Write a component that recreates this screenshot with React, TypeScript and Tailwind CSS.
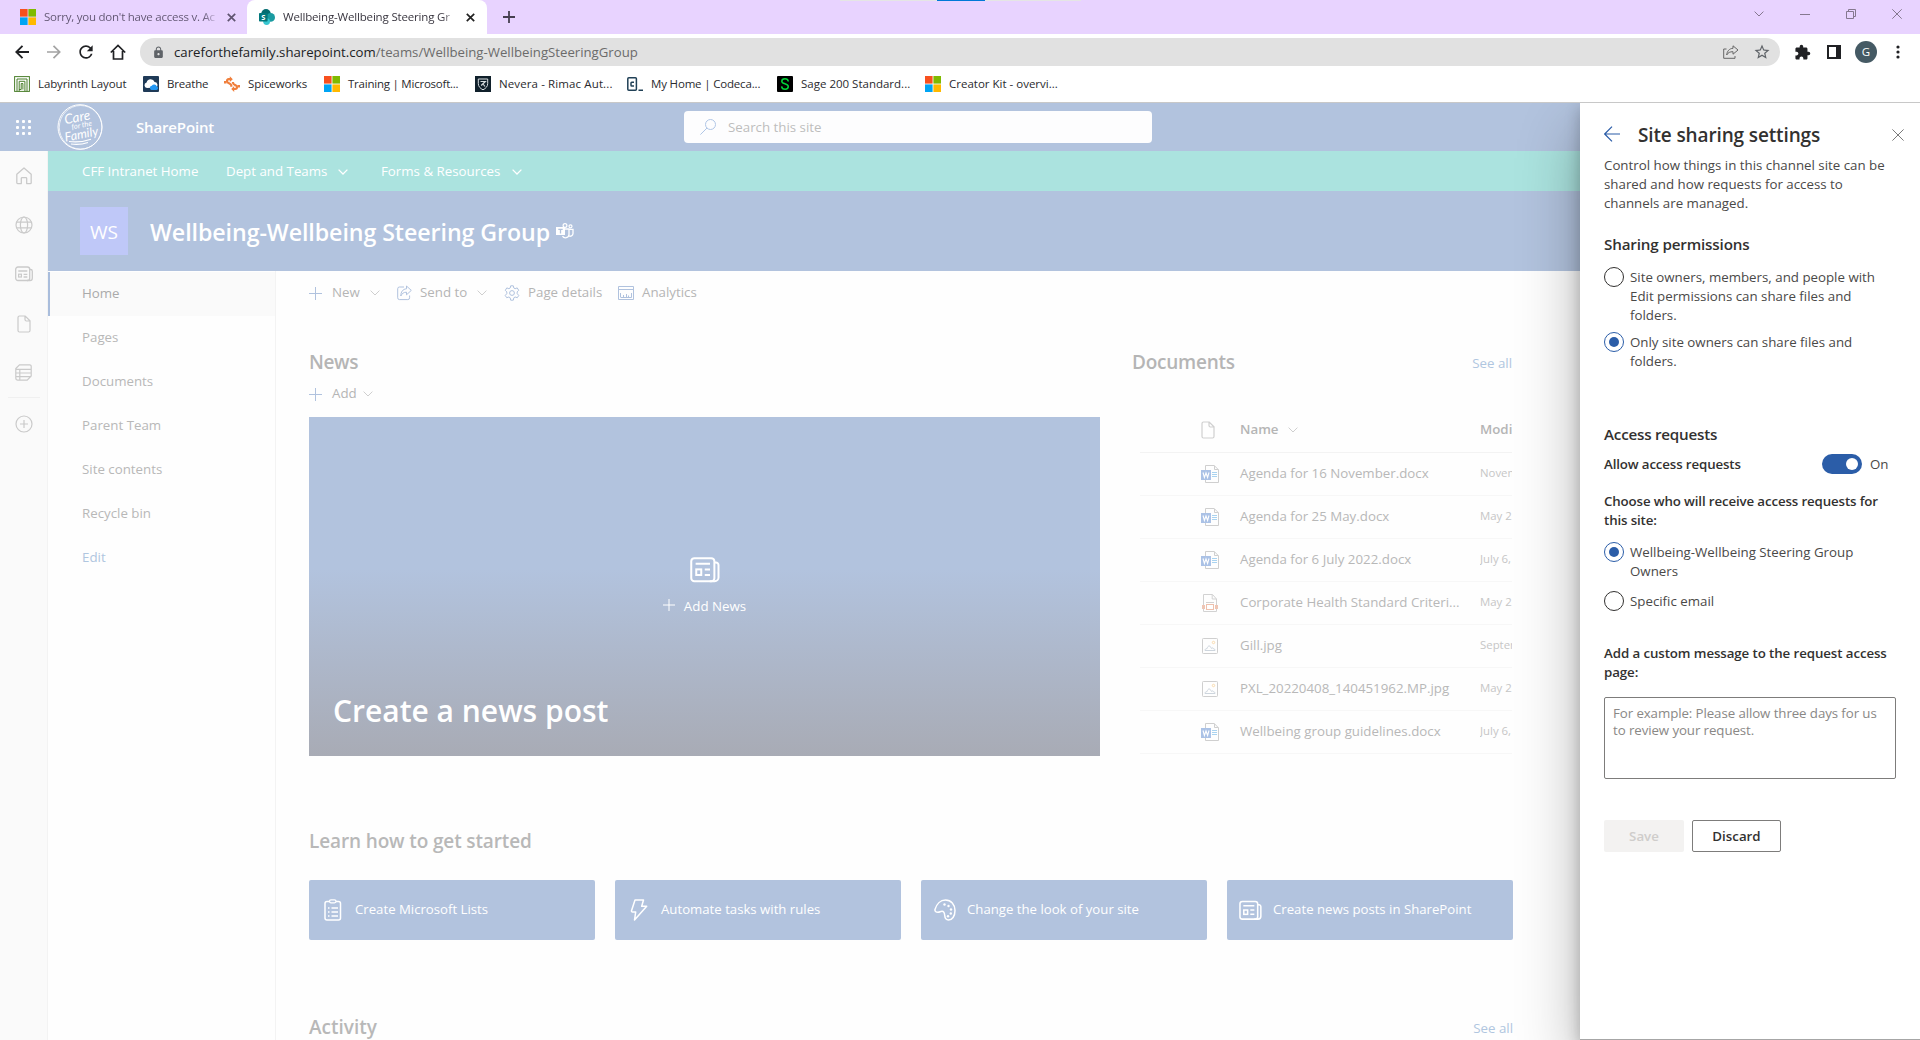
import type { ReactNode } from 'react';
import { MdExtension, MdLock, MdRefresh, MdStarBorder } from 'react-icons/md';

type IconProps = { className?: string };

function Svg({ w, h, className, children }: { w: number; h?: number; className?: string; children: ReactNode }) {
  return (
    <svg
      width={w}
      height={h ?? w}
      viewBox={`0 0 ${w} ${h ?? w}`}
      fill="none"
      stroke="currentColor"
      className={`shrink-0 ${className ?? ''}`}
    >
      {children}
    </svg>
  );
}

/* ---------- icons ---------- */

function MicrosoftIcon() {
  return (
    <Svg w={16} className="stroke-none">
      <path fill="#f8501e" d="M0 0h7.6v7.6H0z" />
      <path fill="#7fba00" d="M8.4 0H16v7.6H8.4z" />
      <path fill="#00a4f4" d="M0 8.4h7.6V16H0z" />
      <path fill="#ffb900" d="M8.4 8.4H16V16H8.4z" />
    </Svg>
  );
}

function SharePointIcon() {
  return (
    <Svg w={16} className="stroke-none">
      <circle cx="7" cy="4.8" r="4.8" fill="#036c70" />
      <circle cx="11.6" cy="8.4" r="4.4" fill="#1a9ba1" />
      <circle cx="7.6" cy="12.6" r="3.4" fill="#37c6d0" />
      <rect x="0" y="4" width="8.6" height="8.6" rx="0.8" fill="#03787c" />
      <text x="4.3" y="11" fontSize="7.5" fontWeight="700" textAnchor="middle" fill="#fff">S</text>
    </Svg>
  );
}

function LabyrinthIcon() {
  return (
    <Svg w={16} className="text-[#4b7f2c]">
      <rect x="0.6" y="0.6" width="14.8" height="14.8" />
      <path d="M3 15.5V3h10v12.5M5.2 15.5V5.3h5.700v10.200M7.200 13.500V7.500h1.700v6M5 13.500h2.200" />
    </Svg>
  );
}

function BreatheIcon() {
  return (
    <Svg w={16} className="stroke-none">
      <rect width="16" height="16" rx="1" fill="#1f3a57" />
      <path fill="#fff" d="M4 12a2.8 2.8 0 0 1-.4-5.5A4.2 4.2 0 0 1 11.6 6 3 3 0 0 1 13 11.6z" />
      <path fill="#2196f3" d="M8.5 14a2.2 2.2 0 0 1 .3-4.3 2.7 2.7 0 0 1 4.9.6A1.9 1.9 0 0 1 13.4 14z" />
    </Svg>
  );
}

function SpiceworksIcon() {
  return (
    <Svg w={16} className="text-[#f07f3c]">
      <path strokeWidth="2.2" d="M6 3.2H4.8A2 2 0 0 0 3 5.2c0 2.200 4.300 1.800 4.300 4.300v1.200" />
      <path strokeWidth="2.2" d="M10 13h1.200A2 2 0 0 0 13 11c0-2.200-4-1.800-4-4.300V6" />
      <path fill="currentColor" stroke="none" d="M5.800.3l3 2.900-3 2.900zM10.200 10v6L7.200 13zM0 5h2.500v2.500H0zM16 11.500h-2.500V9H16z" />
    </Svg>
  );
}

function RimacIcon() {
  return (
    <Svg w={16}>
      <rect width="16" height="16" fill="#10202b" stroke="none" />
      <path stroke="#d7dde0" d="M3.300 3h9.400v4.500c0 3-2 5-4.700 6.300-2.700-1.300-4.700-3.300-4.700-6.300z" />
      <path stroke="#d7dde0" strokeWidth="1.200" d="M5.500 5.500h4.800L6.200 9.500M8 8l2 2.500" />
    </Svg>
  );
}

function CodecademyIcon() {
  return (
    <Svg w={16} className="text-[#204056]">
      <rect x="0.8" y="1.8" width="8.6" height="12.400" rx="1" strokeWidth="1.500" />
      <path strokeWidth="1.500" d="M7 6.200H4.800a.8.800 0 0 0-.8.800v2.300a.8.800 0 0 0 .8.800H7M11.500 14.300H16" />
    </Svg>
  );
}

function SageIcon() {
  return (
    <Svg w={16}>
      <rect width="16" height="16" rx="1" fill="#000" stroke="none" />
      <path
        stroke="#00d639"
        strokeWidth="1.500"
        d="M11.300 5.500C11 3.700 9.700 2.800 8 2.800c-1.900 0-3.200 1-3.200 2.500 0 3.300 6.500 1.700 6.500 5.300 0 1.600-1.400 2.600-3.200 2.600-1.900 0-3.300-1-3.500-2.900"
      />
    </Svg>
  );
}

function Chevron({ className }: IconProps) {
  return (
    <Svg w={10} h={6} className={className}>
      <path d="M.6.600 5 5 9.400.600" />
    </Svg>
  );
}

function Plus({ className }: IconProps) {
  return (
    <Svg w={13} className={className}>
      <path d="M6.500 0v13M0 6.500h13" />
    </Svg>
  );
}

function HomeIcon() {
  return (
    <Svg w={18}>
      <path strokeWidth="1.300" strokeLinejoin="round" d="M1.800 7.300 9 1l7.200 6.300v8.400a.9.900 0 0 1-.9.900h-3.600v-5.100a.8.800 0 0 0-.8-.8H7.100a.8.800 0 0 0-.8.800v5.100H2.700a.9.900 0 0 1-.9-.9z" />
    </Svg>
  );
}

function GlobeIcon() {
  return (
    <Svg w={18}>
      <circle cx="9" cy="9" r="8" strokeWidth="1.200" />
      <ellipse cx="9" cy="9" rx="3.600" ry="8" strokeWidth="1.200" />
      <path strokeWidth="1.200" d="M1.600 6.200h14.800M1.600 11.800h14.800" />
    </Svg>
  );
}

function NewsIcon() {
  return (
    <Svg w={18} h={16}>
      <rect x="0.700" y="1" width="14" height="13.500" rx="2.200" strokeWidth="1.300" />
      <path strokeWidth="1.300" d="M14.700 3.500h.8a1.800 1.800 0 0 1 1.800 1.800v7a2.200 2.200 0 0 1-2.200 2.200h-3M3.300 5h9M8.600 8.300h3.700M8.600 11h3.700" />
      <rect x="3.600" y="8.200" width="2.800" height="2.800" strokeWidth="1.200" />
    </Svg>
  );
}

function BigNewsIcon({ size }: { size: number }) {
  return (
    <svg width={size} height={size} viewBox="0 0 24 24" fill="none" stroke="currentColor" strokeWidth="1.600" className="shrink-0">
      <rect x="1" y="2.500" width="18.500" height="18.500" rx="2.500" />
      <path d="M19.500 6h1.200A2 2 0 0 1 22.800 8v10a3 3 0 0 1-3 3h-4M4.500 7h11.500M11.800 11.500H16M11.800 16H16" />
      <rect x="5" y="11.500" width="4" height="4.500" />
    </svg>
  );
}

function FileIcon() {
  return (
    <Svg w={14} h={18}>
      <path strokeWidth="1.200" d="M2.500 1h5.700L13 5.800v9.700a1.500 1.500 0 0 1-1.500 1.500h-9A1.500 1.500 0 0 1 1 15.500v-13A1.500 1.500 0 0 1 2.500 1zM8 1v3.500A1.500 1.500 0 0 0 9.500 6H13" />
    </Svg>
  );
}

function ListIcon() {
  return (
    <Svg w={17}>
      <path strokeWidth="1.200" d="M4.500.800h10.200a1.500 1.500 0 0 1 1.500 1.500V12l-4 4.200H3A2.200 2.200 0 0 1 .8 14V4.500zM.8 5.300h15.400M.8 9h15.400M.8 12.600h15.400M4.800 5.300v10.900" />
    </Svg>
  );
}

function CirclePlusIcon() {
  return (
    <Svg w={18}>
      <circle cx="9" cy="9" r="8" strokeWidth="1.200" />
      <path strokeWidth="1.200" d="M9 5v8M5 9h8" />
    </Svg>
  );
}

function SendIcon() {
  return (
    <Svg w={15} h={16} className="text-[#b0c2de]">
      <path d="M7 2H2.500A1.800 1.800 0 0 0 .7 3.800v9a1.800 1.800 0 0 0 1.800 1.800h8.300a1.800 1.800 0 0 0 1.800-1.800V10.500" />
      <path strokeLinejoin="round" d="M9.500 3.800V1l4.800 4.400-4.800 4.400V7.200C6.500 7.200 5 8.500 3.800 11c0-4 2-7 5.700-7.200z" />
    </Svg>
  );
}

function GearIcon() {
  return (
    <Svg w={16} className="text-[#b0c2de]">
      <circle cx="8" cy="8" r="2.400" />
      <path
        strokeLinejoin="round"
        d="M6.700.800h2.600l.5 2.200 1.300.700 2.100-.8 1.500 2.400-1.500 1.600v1.800l1.600 1.700-1.500 2.300-2.200-.7-1.300.800-.5 2.400H6.700l-.5-2.400-1.300-.8-2.200.700-1.500-2.300 1.600-1.700V6.900L1.300 5.300l1.500-2.400 2.100.8 1.300-.7z"
      />
    </Svg>
  );
}

function AnalyticsIcon() {
  return (
    <Svg w={16} h={14} className="text-[#b0c2de]">
      <path d="M.5.500h15v13H.5zM.5 3.500h15M2.500 11.500h11M2.500 7v4M5.500 9v2.500M8.500 8v3.500M10.500 9.500v2M13.500 7v4.500" />
    </Svg>
  );
}

function WordIcon() {
  return (
    <Svg w={18}>
      <path stroke="#cfcfcf" d="M4.500 5V.500h8.700l4.300 4.300v12.700h-13V15M13.500.800V4.500h4" />
      <path stroke="#a9d3f0" d="M11 7.500h5M11 9.500h5M11 11.500h5" />
      <rect y="5" width="10" height="10" fill="#abc2e6" stroke="none" />
      <path stroke="#fff" strokeWidth="1.100" d="M2 7.500 3.400 12.500 5 8l1.600 4.500L8 7.500" />
    </Svg>
  );
}

function PdfIcon() {
  return (
    <Svg w={16} h={18}>
      <path stroke="#d2d2d2" d="M1.500.500h9L14.500 5v12.500h-13zM10.200.800V5h4.200M4 8.500h8" />
      <path fill="#efc5b4" stroke="none" d="M0 11h3v4H0zM13 11h3v4h-3z" />
      <rect x="4.500" y="10.500" width="7" height="5" fill="#fff" stroke="#efc0ad" />
    </Svg>
  );
}

function ImageIcon() {
  return (
    <Svg w={16}>
      <rect x="0.500" y="0.500" width="15" height="15" rx="0.800" stroke="#cfcfcf" />
      <path stroke="#cdd5dd" d="M3 12.500c0-1.500 1-2 2-1.800.5-1.700 1.300-2.800 2.200-2.800 1 0 1.500 1.500 2.200 2.500.8-.8 1.800-.6 2 .3.900 0 1.600.6 1.600 1.800z" />
      <circle cx="11.500" cy="4.500" r="1.200" stroke="#fbdcae" />
    </Svg>
  );
}

function ClipboardIcon() {
  return (
    <Svg w={18} h={22}>
      <rect x="1" y="2.500" width="15.500" height="18.500" rx="2" strokeWidth="1.500" />
      <rect x="5.500" y="0.800" width="6.500" height="3" rx="1.500" strokeWidth="1.300" fill="#b2c3de" />
      <path strokeWidth="1.500" d="M4 9h1.500M7.500 9H14M4 13h1.500M7.500 13H14M4 17h1.500M7.500 17H14" />
    </Svg>
  );
}

function BoltIcon() {
  return (
    <Svg w={18} h={22}>
      <path strokeWidth="1.500" strokeLinejoin="round" d="M5 1h8.500l-1.800 6.300h5L4.500 21l1.200-8H2.500a1 1 0 0 1-1-1.300z" />
    </Svg>
  );
}

function PaletteIcon() {
  return (
    <Svg w={22}>
      <path strokeWidth="1.500" d="M1 10.500C2.500 5 6.500 1 11.500 1 17 1 21 5.500 21 11.500 21 17.500 18 21 14.500 21c-3 0-3.600-2-3.800-4.700-.2-2.300-.7-4-2.700-4-1.600 0-2.300 1-4 1C1.800 13.300.6 12 1 10.500z" />
      <g fill="currentColor" stroke="none">
        <circle cx="10.500" cy="5.500" r="1.200" />
        <circle cx="14.500" cy="7" r="1.200" />
        <circle cx="17" cy="10.500" r="1.200" />
        <circle cx="16.800" cy="14.500" r="1.200" />
        <circle cx="14" cy="17.300" r="1.200" />
      </g>
    </Svg>
  );
}

function TeamsIcon() {
  return (
    <Svg w={18} h={16} className="text-white">
      <rect x="0.500" y="4.500" width="8" height="7" fill="currentColor" />
      <path stroke="#b2c3de" strokeWidth="1.300" d="M2.300 6.300h4.400M4.500 6.300v4.200" />
      <circle cx="9" cy="2.500" r="1.900" strokeWidth="1.200" />
      <circle cx="14.500" cy="3.300" r="1.500" strokeWidth="1.200" />
      <path strokeWidth="1.300" d="M9 6h4v5.500a3.500 3.500 0 0 1-6.500 1.600M13 6.300h4v4.200a2.800 2.800 0 0 1-4.300 2.300" />
    </Svg>
  );
}

function Logo() {
  return (
    <Svg w={46} className="text-white">
      <ellipse cx="23" cy="23" rx="22" ry="22.300" strokeWidth="1" />
      <ellipse cx="23.600" cy="23.300" rx="21.300" ry="21.800" strokeWidth="0.700" />
      <g
        fill="currentColor"
        stroke="none"
        textAnchor="middle"
        fontFamily="Lato, sans-serif"
        fontStyle="italic"
        transform="rotate(-11 23 23)"
      >
        <text x="22" y="17.500" fontSize="13.500">Care</text>
        <text x="25" y="24" fontSize="7.500">for the</text>
        <text x="23" y="34.500" fontSize="12.500">Family</text>
      </g>
      <path strokeWidth="1.200" d="M12 37.500c7 1 14 .5 22-2.300M14 40c6 1 11 .5 17-1.500" />
    </Svg>
  );
}

/* ---------- browser chrome ---------- */

function TabClose() {
  return (
    <Svg w={9}>
      <path strokeWidth="1.700" d="M.8.800l7.400 7.400M8.200.800.800 8.200" />
    </Svg>
  );
}

function TabStrip() {
  return (
    <div className="relative flex h-[34px] bg-[#e8d3ff]">
      {/* capture toolbar peeking in from the top edge */}
      <div className="absolute left-[840px] top-0 flex h-px w-[241px] justify-center bg-[#e5e5e5]">
        <div className="h-px w-12 bg-[#0078d7]" />
      </div>
      <div className="flex w-[247px] items-center pl-5 text-[#5f5470]">
        <MicrosoftIcon />
        <span className="ml-2 w-[176px] overflow-hidden whitespace-nowrap bg-gradient-to-r from-[#5f5470] from-90% to-transparent bg-clip-text text-[11.500px] tracking-[-0.02em] text-transparent">
          Sorry, you don't have access v. Ac
        </span>
        <span className="ml-[7px]">
          <TabClose />
        </span>
      </div>
      <div className="flex w-60 items-center rounded-t-lg bg-white pl-3 text-[#222]">
        <SharePointIcon />
        <span className="ml-2 w-[176px] overflow-hidden whitespace-nowrap bg-gradient-to-r from-[#33303a] from-90% to-transparent bg-clip-text text-[11.500px] tracking-[-0.015em] text-transparent">
          Wellbeing-Wellbeing Steering Gr
        </span>
        <span className="ml-[7px]">
          <TabClose />
        </span>
      </div>
      <div className="flex w-11 items-center justify-center text-[#463f50]">
        <Svg w={12}>
          <path strokeWidth="1.800" d="M6 0v12M0 6h12" />
        </Svg>
      </div>
      <div className="ml-auto flex items-center gap-9 pb-[6px] pr-[18px] text-[#85788f]">
        <Chevron />
        <Svg w={10}>
          <path d="M0 5.500h10" />
        </Svg>
        <Svg w={10}>
          <path d="M.5 2.500h7v7h-7zM2.500 2.500v-2h7v7h-2" />
        </Svg>
        <Svg w={10}>
          <path d="M.3.300l9.400 9.400M9.700.300.300 9.700" />
        </Svg>
      </div>
    </div>
  );
}

function AddressBar() {
  return (
    <div className="flex h-9 items-center pl-[15px] pr-[20px] text-[#202124]">
      <Svg w={14}>
        <path strokeWidth="1.900" d="M14 7H1.500M7.500.800 1.300 7l6.200 6.200" />
      </Svg>
      <Svg w={14} className="ml-[18px] text-[#a3a3a3]">
        <path strokeWidth="1.700" d="M0 7h12.500M6.500.800 12.700 7l-6.200 6.200" />
      </Svg>
      <MdRefresh className="ml-[15px] size-5" />
      <Svg w={16} className="ml-[14px]">
        <path strokeWidth="1.700" d="M.8 8.500 8 1.500l7.200 7M3.500 7v8h9V7" />
      </Svg>
      <div className="ml-[14px] flex h-7 w-[1640px] items-center rounded-full bg-[#e1e1e1] pl-3 pr-[9px]">
        <MdLock className="size-[13px] text-[#5f6368]" />
        <p className="ml-[9px] pt-px text-[13.200px] text-[#6b6b6b]">
          <span className="text-[#202124]">careforthefamily.sharepoint.com</span>/teams/Wellbeing-WellbeingSteeringGroup
        </p>
        <Svg w={16} h={14} className="ml-auto text-[#666]">
          <path d="M3.500 4H.700v9.300H12V11" />
          <path strokeLinejoin="round" d="M10 3.300V.800l5 4.200-5 4.200V6.700C7 6.700 5 7.500 3.700 10 4 6 6.500 3.500 10 3.300z" />
        </Svg>
        <MdStarBorder className="ml-[14px] size-[18px] text-[#5f6368]" />
      </div>
      <MdExtension className="ml-[14px] size-[17px]" />
      <Svg w={14} className="ml-[16px]">
        <path strokeWidth="2" d="M1 1h12v12H1z" />
        <path fill="currentColor" stroke="none" d="M9 1h4v12H9z" />
      </Svg>
      <div className="ml-[14px] flex size-[22px] items-center justify-center rounded-full bg-[#455a64] text-[11.500px] text-white">
        G
      </div>
      <Svg w={4} h={14} className="ml-auto">
        <g fill="currentColor" stroke="none">
          <circle cx="2" cy="2" r="1.600" />
          <circle cx="2" cy="7" r="1.600" />
          <circle cx="2" cy="12" r="1.600" />
        </g>
      </Svg>
    </div>
  );
}

const bookmarks = [
  { label: 'Labyrinth Layout', icon: <LabyrinthIcon />, width: 'w-[129px] tracking-[-0.01em]' },
  { label: 'Breathe', icon: <BreatheIcon />, width: 'w-[81px] tracking-[-0.015em]' },
  { label: 'Spiceworks', icon: <SpiceworksIcon />, width: 'w-[100px] tracking-[-0.01em]' },
  { label: 'Training | Microsoft...', icon: <MicrosoftIcon />, width: 'w-[151px] tracking-[-0.02em]' },
  { label: 'Nevera - Rimac Aut...', icon: <RimacIcon />, width: 'w-[152px] tracking-[0.01em]' },
  { label: 'My Home | Codeca...', icon: <CodecademyIcon />, width: 'w-[150px] tracking-[-0.015em]' },
  { label: 'Sage 200 Standard...', icon: <SageIcon />, width: 'w-[148px]' },
  { label: 'Creator Kit - overvi...', icon: <MicrosoftIcon />, width: 'w-[150px]' },
];

function BookmarksBar() {
  return (
    <div className="flex h-[33px] items-center border-b border-[#c8c8c8] pb-1 pl-[14px] text-[11.500px] text-[#2a2a2e]">
      {bookmarks.map((b) => (
        <div key={b.label} className={`flex shrink-0 items-center gap-2 whitespace-nowrap ${b.width}`}>
          {b.icon}
          {b.label}
        </div>
      ))}
    </div>
  );
}

/* ---------- SharePoint page ---------- */

function SuiteHeader() {
  return (
    <header className="flex h-12 items-center bg-[#b2c3de] text-white">
      <div className="ml-4 grid grid-cols-3 gap-[3px]">
        {Array.from({ length: 9 }, (_, i) => (
          <span key={i} className="size-[3px] rounded-[1px] bg-white" />
        ))}
      </div>
      <div className="ml-[26px]">
        <Logo />
      </div>
      <span className="ml-[33px] w-[548px] text-[15px] font-semibold tracking-[-0.01em]">SharePoint</span>
      <div className="flex h-8 w-[468px] items-center rounded bg-[#fdfdfe] pl-4 text-[#bdbdbd]">
        <Svg w={16} className="text-[#b0c6e6]">
          <circle cx="10.500" cy="5.500" r="5" />
          <path d="M7 9 .4 15.600" />
        </Svg>
        <span className="ml-3 pt-0.5 text-[13.300px]">Search this site</span>
      </div>
    </header>
  );
}

const railIcons = [<HomeIcon />, <GlobeIcon />, <NewsIcon />, <FileIcon />, <ListIcon />];

function AppRail() {
  return (
    <aside className="flex w-12 shrink-0 flex-col items-center border-r border-[#f3f3f3] bg-[#fafafa] text-[#cacaca]">
      {railIcons.map((icon, i) => (
        <div key={i} className="flex h-[49.300px] w-full items-center justify-center">
          {icon}
        </div>
      ))}
      <div className="h-px w-8 bg-[#f0f0f0]" />
      <div className="flex h-[52px] items-center">
        <CirclePlusIcon />
      </div>
    </aside>
  );
}

function HubNav() {
  return (
    <nav className="flex h-10 items-center bg-[#abe3df] pl-[34px] pt-px text-[13.300px] text-white">
      <span className="w-[144px]">CFF Intranet Home</span>
      <span className="w-[112px]">Dept and Teams</span>
      <Chevron className="mr-[33px] stroke-[1.300px]" />
      <span className="w-[131px]">Forms & Resources</span>
      <Chevron className="stroke-[1.300px]" />
    </nav>
  );
}

function SiteHeader() {
  return (
    <div className="flex h-20 items-center bg-[#b2c3de] pl-8 text-white">
      <div className="flex size-12 items-center justify-center bg-[#bfc8f8] pt-0.5 text-[19px]">WS</div>
      <h1 className="ml-[22px] mr-[6px] whitespace-nowrap pt-0.5 text-[23.200px] font-semibold tracking-[-0.003em]">
        Wellbeing-Wellbeing Steering Group
      </h1>
      <TeamsIcon />
    </div>
  );
}

const navItems = ['Pages', 'Documents', 'Parent Team', 'Site contents', 'Recycle bin'];

function SideNav() {
  return (
    <nav className="flex w-[228px] shrink-0 flex-col border-r border-[#f3f3f3] pt-px text-[13.300px] text-[#b8b8b8]">
      <div className="flex h-11 items-center border-l-2 border-[#a9bddc] bg-[#fafafa] pl-8 text-[#aaa]">Home</div>
      {navItems.map((item) => (
        <div key={item} className="flex h-11 items-center pl-[34px]">
          {item}
        </div>
      ))}
      <div className="flex h-11 items-center pl-[34px] text-[#b0c6e0]">Edit</div>
    </nav>
  );
}

function CommandBar() {
  return (
    <div className="flex h-11 items-center text-[13.300px] text-[#b5b5b5]">
      <Plus className="text-[#b0c2de]" />
      <span className="ml-[10px] w-[38px]">New</span>
      <Chevron className="mr-[17px] text-[#cfcfcf]" />
      <SendIcon />
      <span className="ml-2 w-[57px]">Send to</span>
      <Chevron className="mr-[17px] text-[#cfcfcf]" />
      <GearIcon />
      <span className="ml-2 w-[90px]">Page details</span>
      <AnalyticsIcon />
      <span className="ml-2">Analytics</span>
    </div>
  );
}

function NewsSection() {
  return (
    <section className="w-[791px] shrink-0">
      <h2 className="h-7 text-[19px] font-semibold leading-7 tracking-[-0.02em] text-[#b5b5b5]">News</h2>
      <div className="mt-[6px] flex h-6 items-center text-[13.300px] text-[#b5b5b5]">
        <Plus className="text-[#b0c2de]" />
        <span className="ml-[10px] w-[31px]">Add</span>
        <Chevron className="text-[#cfcfcf]" />
      </div>
      <div className="mt-[11px] flex h-[339px] flex-col items-center bg-gradient-to-b from-[#b2c3de] from-45% to-[#a8abb5] text-white">
        <div className="mt-[138px]">
          <BigNewsIcon size={30} />
        </div>
        <div className="mt-3 flex items-center gap-[9px] text-[13.300px]">
          <Svg w={12} className="mb-[3px]">
            <path d="M6 0v12M0 6h12" />
          </Svg>
          Add News
        </div>
        <h3 className="mb-[22px] mt-auto self-start pl-6 text-[30px] font-semibold leading-[46px]">
          Create a news post
        </h3>
      </div>
    </section>
  );
}

const documents = [
  { name: 'Agenda for 16 November.docx', modified: 'November', icon: <WordIcon /> },
  { name: 'Agenda for 25 May.docx', modified: 'May 25', icon: <WordIcon /> },
  { name: 'Agenda for 6 July 2022.docx', modified: 'July 6, 2022', icon: <WordIcon /> },
  { name: 'Corporate Health Standard Criteri...', modified: 'May 25', icon: <PdfIcon /> },
  { name: 'Gill.jpg', modified: 'September', icon: <ImageIcon /> },
  { name: 'PXL_20220408_140451962.MP.jpg', modified: 'May 25', icon: <ImageIcon /> },
  { name: 'Wellbeing group guidelines.docx', modified: 'July 6, 2022', icon: <WordIcon /> },
];

function DocumentsSection() {
  return (
    <section className="ml-8 w-[380px] shrink-0 overflow-hidden">
      <div className="flex h-7 items-center justify-between">
        <h2 className="text-[19px] font-semibold leading-7 tracking-[-0.012em] text-[#b5b5b5]">Documents</h2>
        <span className="pt-1 text-[13.300px] text-[#b0c6e0]">See all</span>
      </div>
      <div className="ml-2 mt-8 overflow-hidden">
        <div className="flex h-[45px] items-center border-b border-[#f3f3f3] text-[13.300px] font-semibold text-[#b5b5b5]">
          <div className="ml-[61px] w-[39px] text-[#cfcfcf]">
            <FileIcon />
          </div>
          <span className="w-12">Name</span>
          <Chevron className="text-[#cfcfcf]" />
          <span className="ml-auto w-8 overflow-hidden">Modified</span>
        </div>
        {documents.map((doc) => (
          <div key={doc.name} className="flex h-[43px] items-center border-b border-[#f7f7f7]">
            <div className="ml-[60px] flex w-5 shrink-0 justify-center">{doc.icon}</div>
            <span className="ml-5 shrink-0 whitespace-nowrap text-[13.300px] text-[#b8b8b8]">{doc.name}</span>
            <span className="ml-auto w-8 shrink-0 overflow-hidden whitespace-nowrap pb-[3px] text-[11.400px] text-[#c6c6c6]">
              {doc.modified}
            </span>
          </div>
        ))}
      </div>
    </section>
  );
}

const guides = [
  { label: 'Create Microsoft Lists', icon: <ClipboardIcon /> },
  { label: 'Automate tasks with rules', icon: <BoltIcon /> },
  { label: 'Change the look of your site', icon: <PaletteIcon /> },
  { label: 'Create news posts in SharePoint', icon: <BigNewsIcon size={23} /> },
];

function GetStarted() {
  return (
    <section className="mt-[71px]">
      <h2 className="h-7 text-[19px] font-semibold leading-7 tracking-[-0.007em] text-[#b8b8b8]">
        Learn how to get started
      </h2>
      <div className="mt-[25px] grid w-[1204px] grid-cols-4 gap-5">
        {guides.map((g) => (
          <div key={g.label} className="flex h-[60px] items-center rounded-[2px] bg-[#b2c3de] pl-3 text-[13.200px] text-white">
            <div className="flex w-[23px] justify-center">{g.icon}</div>
            <span className="ml-[11px] whitespace-nowrap">{g.label}</span>
          </div>
        ))}
      </div>
    </section>
  );
}

function Radio({ checked, lines }: { checked?: boolean; lines: string[] }) {
  return (
    <div className="flex gap-[6px]">
      <span
        className={`flex size-5 shrink-0 items-center justify-center rounded-full border ${
          checked ? 'border-[#2b5da8]' : 'border-[#323130]'
        }`}
      >
        {checked && <span className="size-[10px] rounded-full bg-[#2b5da8]" />}
      </span>
      <span className="whitespace-nowrap pt-px">
        {lines.map((line) => (
          <span key={line} className="block">
            {line}
          </span>
        ))}
      </span>
    </div>
  );
}

function SharingPanel() {
  return (
    <aside className="absolute bottom-0 right-0 top-0 w-[340px] border-b border-[#a6a6a6] bg-white px-6 text-[13.300px] leading-[19px] text-[#4a4948] shadow-[0_25.6px_57.6px_rgba(0,0,0,0.3),0_4.8px_14.4px_rgba(0,0,0,0.22)]">
      <div className="flex items-center pt-[18px]">
        <Svg w={16} className="mb-[3px] text-[#2b5da8]">
          <path strokeWidth="1.200" d="M16 8H.8M8 .700.700 8 8 15.300" />
        </Svg>
        <h2 className="ml-[18px] text-[19px] font-semibold leading-7 tracking-[-0.007em] text-[#323130]">
          Site sharing settings
        </h2>
        <Svg w={12} className="-mr-[8px] mb-px ml-auto text-[#7a7a7a]">
          <path d="M.4.400l11.200 11.200M11.600.400.400 11.600" />
        </Svg>
      </div>
      <p className="mt-[7px] whitespace-nowrap">
        Control how things in this channel site can be
        <br />
        shared and how requests for access to
        <br />
        channels are managed.
      </p>

      <h3 className="mt-5 text-[15.200px] font-semibold leading-[22px] tracking-[-0.01em] text-[#323130]">
        Sharing permissions
      </h3>
      <div className="mt-3 flex flex-col gap-[7px]">
        <Radio lines={['Site owners, members, and people with', 'Edit permissions can share files and', 'folders.']} />
        <Radio checked lines={['Only site owners can share files and', 'folders.']} />
      </div>

      <h3 className="mt-[52px] text-[15.200px] font-semibold leading-[22px] tracking-[-0.015em] text-[#323130]">
        Access requests
      </h3>
      <div className="mt-[9px] flex h-5 items-center">
        <span className="font-semibold tracking-[-0.01em] text-[#323130]">Allow access requests</span>
        <span className="ml-auto flex h-5 w-10 items-center justify-end rounded-full bg-[#2b5da8] pr-1">
          <span className="size-3 rounded-full bg-white" />
        </span>
        <span className="ml-2 w-[26px]">On</span>
      </div>
      <p className="mt-[18px] whitespace-nowrap font-semibold tracking-[-0.01em] text-[#323130]">
        Choose who will receive access requests for
        <br />
        this site:
      </p>
      <div className="mt-3 flex flex-col gap-[10px]">
        <Radio checked lines={['Wellbeing-Wellbeing Steering Group', 'Owners']} />
        <Radio lines={['Specific email']} />
      </div>
      <p className="mt-[33px] whitespace-nowrap font-semibold tracking-[-0.007em] text-[#323130]">
        Add a custom message to the request access
        <br />
        page:
      </p>
      <div className="mt-[15px] h-[82px] whitespace-nowrap rounded-[2px] border border-[#7d7c7b] px-2 py-[7px] leading-[17px] tracking-[-0.007em] text-[#8a8886]">
        For example: Please allow three days for us
        <br />
        to review your request.
      </div>
      <div className="mt-[41px] flex gap-2 font-semibold">
        <button className="h-8 w-20 rounded-[2px] bg-[#f3f2f1] text-[#cfcdcb]">Save</button>
        <button className="h-8 w-[89px] rounded-[2px] border border-[#7d7c7b] text-[#323130]">Discard</button>
      </div>
    </aside>
  );
}

export default function App() {
  return (
    <div className="flex h-[1040px] w-[1920px] flex-col overflow-hidden bg-white font-['Open_Sans',sans-serif] leading-normal">
      <TabStrip />
      <AddressBar />
      <BookmarksBar />
      <div className="relative min-h-0 flex-1 overflow-hidden bg-[#fefefe]">
        <SuiteHeader />
        <div className="flex h-[889px]">
          <AppRail />
          <div className="min-w-0 flex-1">
            <HubNav />
            <SiteHeader />
            <div className="flex h-[769px]">
              <SideNav />
              <main className="ml-[33px] w-[1204px] shrink-0">
                <CommandBar />
                <div className="flex pt-[33px]">
                  <NewsSection />
                  <DocumentsSection />
                </div>
                <GetStarted />
                <section className="mt-[73px] flex h-7 items-center justify-between text-[#b8b8b8]">
                  <h2 className="text-[19px] font-semibold leading-7">Activity</h2>
                  <span className="pt-1 text-[13.300px] text-[#b0c6e0]">See all</span>
                </section>
              </main>
            </div>
          </div>
        </div>
        <SharingPanel />
      </div>
    </div>
  );
}
